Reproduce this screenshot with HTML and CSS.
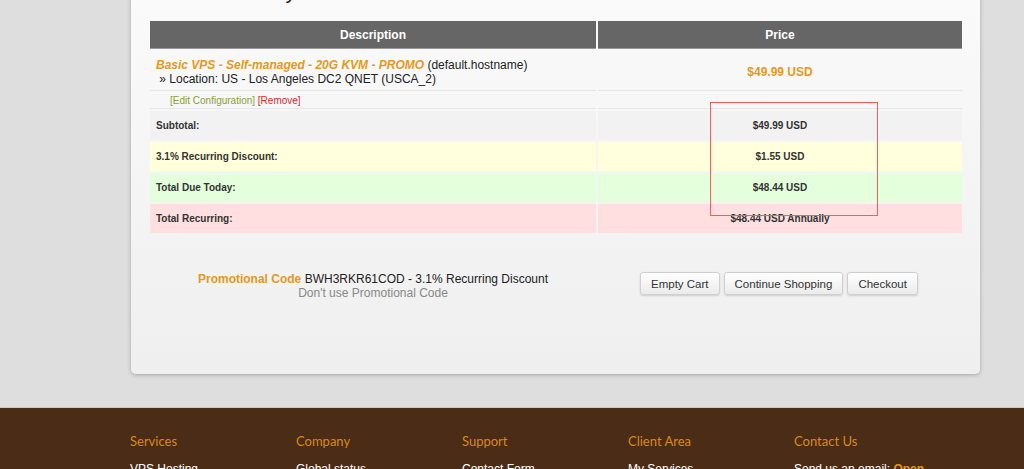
FILE: index.html
```html
<!DOCTYPE html>
<html lang="en">
<head>
  <meta charset="UTF-8" />
  <title>Order Summary</title>
  <link rel="stylesheet" href="styles.css">
</head>
<body>
  <!-- Cart card -->
  <section class="card">
    <h2 class="title">Order Summary</h2>

    <table class="cart">
      <thead>
        <tr>
          <th class="col-desc">Description</th>
          <th class="col-price">Price</th>
        </tr>
      </thead>
      <tbody>
        <tr class="item">
          <td>
            <span class="product">Basic VPS - Self-managed - 20G KVM - PROMO</span> (default.hostname)<br>
            &nbsp;» Location: US - Los Angeles DC2 QNET (USCA_2)
          </td>
          <td class="price">$49.99 USD</td>
        </tr>
        <tr class="item-actions">
          <td><a href="#" class="edit">[Edit Configuration]</a> <a href="#" class="remove">[Remove]</a></td>
          <td></td>
        </tr>
        <tr class="sum subtotal">
          <td>Subtotal:</td>
          <td class="amount">$49.99 USD</td>
        </tr>
        <tr class="sum discount">
          <td>3.1% Recurring Discount:</td>
          <td class="amount">$1.55 USD</td>
        </tr>
        <tr class="sum due">
          <td>Total Due Today:</td>
          <td class="amount">$48.44 USD</td>
        </tr>
        <tr class="sum recurring">
          <td>Total Recurring:</td>
          <td class="amount">$48.44 USD Annually</td>
        </tr>
      </tbody>
    </table>

    <div class="actions">
      <div class="promo">
        <div><span class="promo-label">Promotional Code</span> BWH3RKR61COD - 3.1% Recurring Discount</div>
        <a href="#" class="promo-remove">Don't use Promotional Code</a>
      </div>
      <div class="buttons">
        <button>Empty Cart</button>
        <button>Continue Shopping</button>
        <button>Checkout</button>
      </div>
    </div>

    <!-- highlight drawn on the screenshot -->
    <div class="highlight"></div>
  </section>

  <!-- Footer -->
  <footer class="footer">
    <div class="footer-cols">
      <div class="footer-col">
        <h4>Services</h4>
        <a href="#">VPS Hosting</a>
      </div>
      <div class="footer-col">
        <h4>Company</h4>
        <a href="#">Global status</a>
      </div>
      <div class="footer-col">
        <h4>Support</h4>
        <a href="#">Contact Form</a>
      </div>
      <div class="footer-col">
        <h4>Client Area</h4>
        <a href="#">My Services</a>
      </div>
      <div class="footer-col">
        <h4>Contact Us</h4>
        <span>Send us an email: <a href="#" class="open">Open</a></span>
      </div>
    </div>
  </footer>
</body>
</html>
```

FILE: styles.css
```css
:root {
  --orange: #e6981c;
  --text: #333;
  --page: #dedede;
  --brown: #4a2c17;
}

* { box-sizing: border-box; }

body {
  margin: 0;
  background-color: var(--page);
  font-family: "Liberation Sans", Arial, sans-serif;
  color: #222;
  overflow: hidden;
}

a { text-decoration: none; }

.card {
  position: relative;
  width: 849px;
  margin: -33px 0 0 131px;
  padding: 10px 17px 74px 17px;
  background: linear-gradient(#fbfbfb, #efefef);
  border-radius: 0 0 5px 5px;
  box-shadow: 0 1px 4px rgba(0, 0, 0, 0.25);
}

.title {
  margin: 0 0 14px -8px;
  font-size: 22px;
  line-height: 28px;
  font-weight: normal;
  color: #222;
}

.cart {
  width: 816px;
  border-collapse: separate;
  border-spacing: 2px;
  font-size: 12px;
}

.cart th {
  background-color: #666;
  color: #fff;
  font-weight: bold;
  height: 28px;
  border-bottom: 1px solid #999;
  padding: 0;
}

.col-desc { width: 446px; }

.item td {
  height: 40px;
  vertical-align: middle;
  padding: 4px 6px 2px;
  line-height: 14px;
  border-bottom: 1px solid #e6e6e6;
}

.item .price {
  text-align: center;
  color: var(--orange);
  font-weight: bold;
}

.product {
  color: var(--orange);
  font-weight: bold;
  font-style: italic;
}

.item-actions td {
  height: 16px;
  padding: 0 0 0 20px;
  font-size: 10px;
  line-height: 12px;
  border-bottom: 1px solid #e6e6e6;
}

.edit { color: #8a9e36; }
.remove { color: #d42a2a; }

.sum td {
  height: 29px;
  padding: 0 6px;
  font-size: 10px;
  line-height: 12px;
  font-weight: bold;
  color: var(--text);
}

.sum .amount { text-align: center; }

.subtotal td { background-color: #f2f2f2; }
.discount td { background-color: #ffffdc; }
.due td { background-color: #e4ffdc; }
.recurring td { background-color: #ffdfdf; }

.actions {
  display: flex;
  margin-top: 37px;
  padding-left: 2px;
}

.promo {
  width: 446px;
  text-align: center;
  font-size: 12px;
  line-height: 14px;
}

.promo-label {
  color: var(--orange);
  font-weight: bold;
}

.promo-remove { color: #888; }

.buttons {
  width: 366px;
  display: flex;
  justify-content: center;
  gap: 4px;
}

.buttons button {
  font-family: "Liberation Sans", Arial, sans-serif;
  font-size: 11.5px;
  color: #333;
  height: 23px;
  padding: 0 10px;
  background: linear-gradient(#ffffff, #ebebeb);
  border: 1px solid #cfcfcf;
  border-radius: 3px;
  box-shadow: 0 1px 2px rgba(0, 0, 0, 0.15);
  cursor: pointer;
}

.highlight {
  position: absolute;
  left: 579px;
  top: 135px;
  width: 168px;
  height: 114px;
  border: 1px solid #ff5a5a;
}

.footer {
  margin-top: 33px;
  border-top: 1px solid #c8c8c8;
  background-color: var(--brown);
  padding-top: 24px;
  height: 80px;
}

.footer-cols {
  margin-left: 130px;
  display: grid;
  grid-template-columns: repeat(5, 166px);
}

.footer-col h4 {
  margin: 0 0 12px;
  font-family: Lato, "Open Sans", sans-serif;
  font-weight: normal;
  font-size: 13px;
  line-height: 18px;
  color: #d98a16;
}

.footer-col a,
.footer-col span {
  display: block;
  font-size: 12px;
  color: #fff;
}

.footer-col .open {
  display: inline;
  color: #e6981c;
  font-weight: bold;
}
```
